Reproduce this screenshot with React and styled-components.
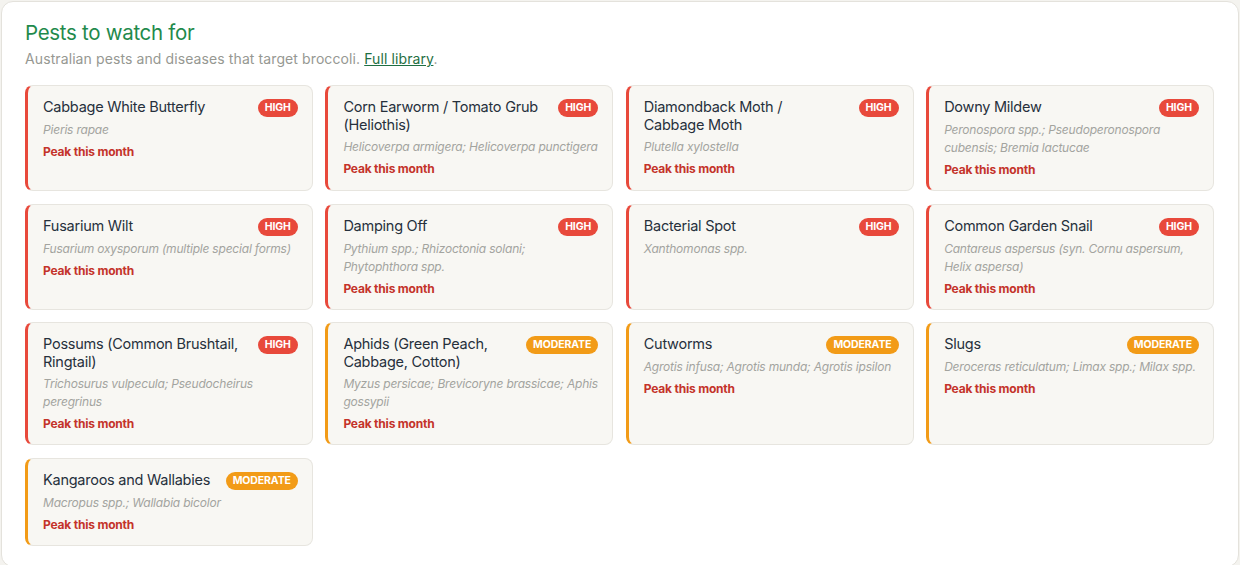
import React from "react";
import { styled, createGlobalStyle } from "styled-components";

const pests = [
  { name: "Cabbage White Butterfly", sci: "Pieris rapae", level: "high" },
  { name: "Corn Earworm / Tomato Grub (Heliothis)", sci: "Helicoverpa armigera; Helicoverpa punctigera", level: "high" },
  { name: "Diamondback Moth / Cabbage Moth", sci: "Plutella xylostella", level: "high" },
  { name: "Downy Mildew", sci: "Peronospora spp.; Pseudoperonospora cubensis; Bremia lactucae", level: "high" },
  { name: "Fusarium Wilt", sci: "Fusarium oxysporum (multiple special forms)", level: "high" },
  { name: "Damping Off", sci: "Pythium spp.; Rhizoctonia solani; Phytophthora spp.", level: "high" },
  { name: "Bacterial Spot", sci: "Xanthomonas spp.", level: "high", noPeak: true },
  { name: "Common Garden Snail", sci: "Cantareus aspersus (syn. Cornu aspersum, Helix aspersa)", level: "high" },
  { name: "Possums (Common Brushtail, Ringtail)", sci: "Trichosurus vulpecula; Pseudocheirus peregrinus", level: "high" },
  { name: "Aphids (Green Peach, Cabbage, Cotton)", sci: "Myzus persicae; Brevicoryne brassicae; Aphis gossypii", level: "moderate" },
  { name: "Cutworms", sci: "Agrotis infusa; Agrotis munda; Agrotis ipsilon", level: "moderate" },
  { name: "Slugs", sci: "Deroceras reticulatum; Limax spp.; Milax spp.", level: "moderate" },
  { name: "Kangaroos and Wallabies", sci: "Macropus spp.; Wallabia bicolor", level: "moderate" },
];

const levelColor = { high: "#e8493b", moderate: "#f29b17" };

export default function App() {
  return (
    <>
      <Global />
      <Panel>
        <Title>Pests to watch for</Title>
        <Subtitle>
          Australian pests and diseases that target broccoli. <LibLink href="#">Full library</LibLink>.
        </Subtitle>
        <Grid>
          {pests.map((p) => (
            <Card key={p.name} $level={p.level}>
              <Head>
                <Name>{p.name}</Name>
                <Badge $level={p.level}>{p.level === "high" ? "HIGH" : "MODERATE"}</Badge>
              </Head>
              <Sci>{p.sci}</Sci>
              {!p.noPeak && <Peak>Peak this month</Peak>}
            </Card>
          ))}
        </Grid>
      </Panel>
    </>
  );
}

const Global = createGlobalStyle`
  body {
    margin: 0;
    background: #f4f3ef;
    font-family: Inter, "Noto Sans", sans-serif;
  }
`;

const Panel = styled.div`
  margin: 1px;
  background: #ffffff;
  border: 1px solid #e4e2dc;
  border-radius: 12px;
  padding: 19px 24px 20px 23px;
  min-height: 523px;
`;

const Title = styled.h2`
  margin: 0;
  font-size: 20.5px;
  font-weight: 400;
  letter-spacing: -0.3px;
  line-height: 24px;
  color: #1f8a4c;
`;

const Subtitle = styled.p`
  margin: 5px 0 0;
  font-size: 14px;
  line-height: 18px;
  color: #969892;
  letter-spacing: 0.1px;
`;

const LibLink = styled.a`
  color: #1f6f43;
  text-decoration: underline;
`;

const Grid = styled.div`
  margin-top: 17px;
  display: grid;
  grid-template-columns: repeat(4, 1fr);
  column-gap: 12.5px;
  row-gap: 12.5px;
`;

const Card = styled.div`
  background: #f8f7f3;
  border: 1px solid #e7e5df;
  border-left: 3px solid ${(p) => levelColor[p.$level]};
  border-radius: 8px;
  padding: 12px 13px 11px 15px;
  display: flex;
  flex-direction: column;
`;

const Head = styled.div`
  display: flex;
  justify-content: space-between;
  align-items: flex-start;
  gap: 14px;
`;

const Name = styled.div`
  font-size: 14.5px;
  line-height: 18px;
  color: #26303c;
  letter-spacing: -0.25px;
`;

const Badge = styled.span`
  flex-shrink: 0;
  margin-top: 1px;
  margin-right: 1px;
  height: 18px;
  padding: 0 7px;
  border-radius: 9px;
  background: ${(p) => levelColor[p.$level]};
  color: #ffffff;
  font-size: 10.5px;
  font-weight: 700;
  line-height: 18px;
  letter-spacing: -0.1px;
`;

const Sci = styled.div`
  margin-top: 4px;
  font-size: 12px;
  line-height: 18px;
  font-style: italic;
  color: #a3a49f;
  letter-spacing: -0.2px;
`;

const Peak = styled.div`
  margin-top: 4px;
  font-size: 12px;
  line-height: 18px;
  font-weight: 700;
  color: #c4332a;
  letter-spacing: -0.2px;
`;
